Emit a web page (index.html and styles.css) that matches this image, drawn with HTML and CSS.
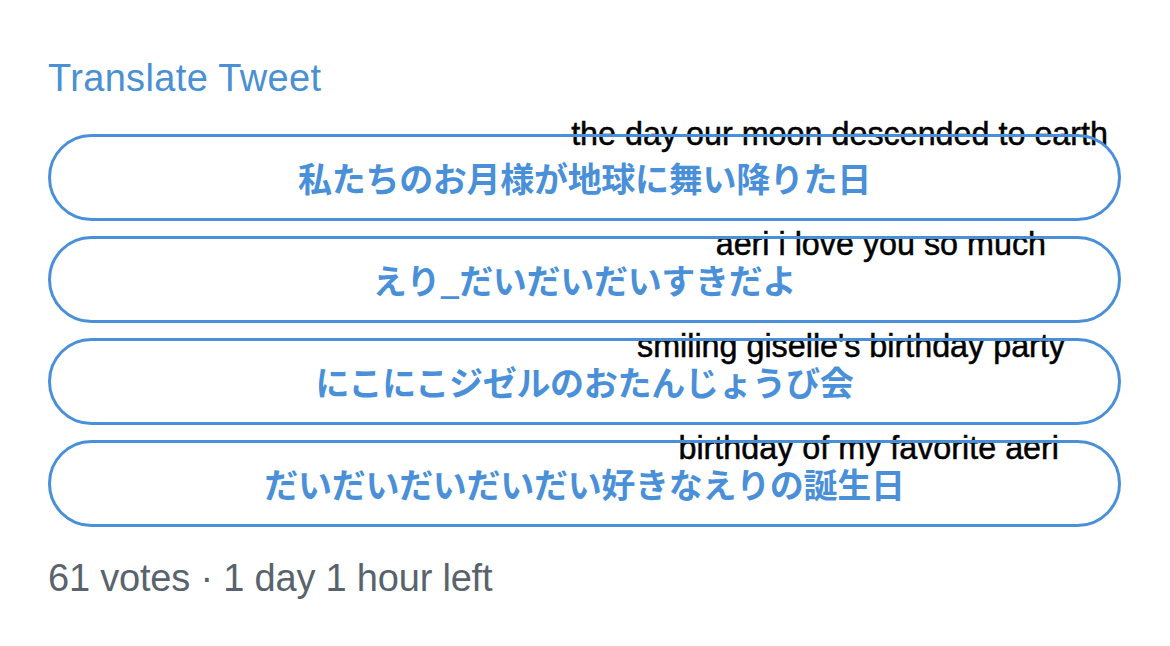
FILE: index.html
```html
<!DOCTYPE html>
<html lang="ja">
<head>
<meta charset="utf-8">
<title>Poll</title>
<link rel="stylesheet" href="styles.css">
</head>
<body>
<main class="poll">
  <div class="translate">Translate Tweet</div>
  <div class="options">
    <div class="option">
      <span class="label">私たちのお月様が地球に舞い降りた日</span>
      <span class="note note-1">the day our moon descended to earth</span>
    </div>
    <div class="option">
      <span class="label">えり_だいだいだいすきだよ</span>
      <span class="note note-2">aeri i love you so much</span>
    </div>
    <div class="option">
      <span class="label">にこにこジゼルのおたんじょうび会</span>
      <span class="note note-3">smiling giselle's birthday party</span>
    </div>
    <div class="option">
      <span class="label">だいだいだいだいだい好きなえりの誕生日</span>
      <span class="note note-4">birthday of my favorite aeri</span>
    </div>
  </div>
  <div class="meta">61 votes · 1 day 1 hour left</div>
</main>
</body>
</html>
```

FILE: styles.css
```css
html {
  margin: 0;
  padding: 0;
  background: #ffffff;
}

body {
  margin: 0;
  padding: 0;
  width: 1170px;
  height: 646px;
  overflow: hidden;
  font-family: "Liberation Sans", Arial, sans-serif;
}

.poll {
  padding: 56px 0 0 48px;
  width: 1073px;
}

.translate {
  font-size: 38px;
  line-height: 44px;
  color: #4a90d4;
  letter-spacing: 0.35px;
}

.options {
  margin-top: 34px;
  display: flex;
  flex-direction: column;
  gap: 15px;
}

.option {
  position: relative;
  box-sizing: border-box;
  height: 87px;
  border: 3px solid #4a90d9;
  border-radius: 44px;
  display: flex;
  align-items: center;
  justify-content: center;
}

.label {
  font-family: "Noto Sans CJK JP", "Noto Sans", sans-serif;
  font-weight: 700;
  font-size: 34px;
  line-height: 1;
  color: #4a90d9;
  letter-spacing: -0.3px;
}

.note {
  position: absolute;
  z-index: -1;
  font-family: "Liberation Sans", Arial, sans-serif;
  font-size: 32.3px;
  line-height: 32px;
  color: #000000;
  white-space: nowrap;
  -webkit-text-stroke: 0.5px #000000;
}

.note-1 { top: -19px; right: 10px; }
.note-2 { top: -11px; right: 72px; }
.note-3 { top: -11px; right: 53px; }
.note-4 { top: -11px; right: 59px; }

.meta {
  margin-top: 29px;
  font-size: 38px;
  line-height: 44px;
  color: #59636d;
  letter-spacing: -0.2px;
}
```
